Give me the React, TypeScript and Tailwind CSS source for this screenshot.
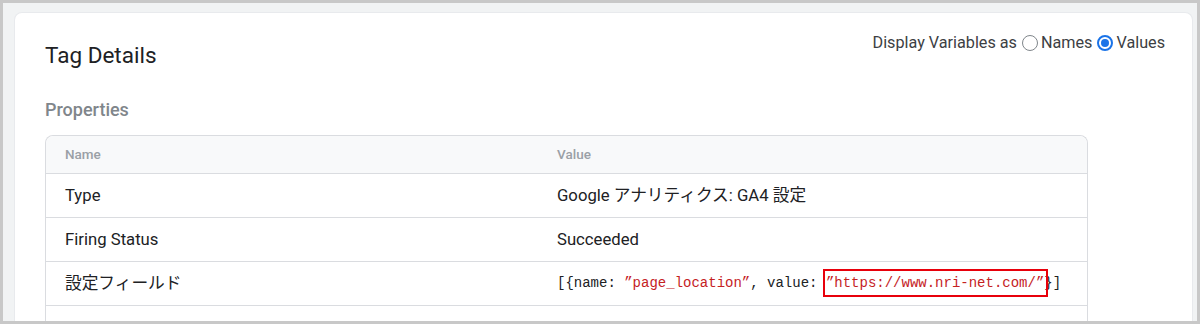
const rows = [
  { name: "Type", value: "Google アナリティクス: GA4 設定" },
  { name: "Firing Status", value: "Succeeded" },
];

function Radio({ checked, label }: { checked?: boolean; label: string }) {
  return (
    <label className="flex items-center gap-[3px]">
      <span
        className={
          checked
            ? "flex h-[16px] w-[16px] items-center justify-center rounded-full border-2 border-[#1a73e8]"
            : "h-[16px] w-[16px] rounded-full border border-[#80868b]"
        }
      >
        {checked ? <span className="h-[8px] w-[8px] rounded-full bg-[#1a73e8]" /> : null}
      </span>
      <span>{label}</span>
    </label>
  );
}

export default function App() {
  return (
    <div
      className="h-[324px] w-[1200px] overflow-hidden border-[3px] border-[#c8c8c8] bg-[#f1f3f4] pl-[11px] pr-[4px] pt-[9px]"
      style={{ fontFamily: 'Roboto, "Noto Sans CJK JP", sans-serif' }}
    >
      <div className="h-full rounded-t-lg border border-b-0 border-[#e8eaed] bg-white pl-[30px] pr-[27px] pt-[19px]">
        <div className="flex items-start justify-between">
          <h1 className="mt-[8px] text-[22.5px] leading-[30px] text-[#202124]">Tag Details</h1>
          <div className="flex items-center gap-[5px] text-[16.2px] leading-[22px] text-[#3c4043]">
            <span>Display Variables as</span>
            <Radio label="Names" />
            <Radio checked label="Values" />
          </div>
        </div>

        <h2 className="mt-[29px] text-[18px] font-medium leading-[22px] text-[#80868b]">Properties</h2>

        <div className="mt-[14px] w-[1043px] rounded-t-lg border border-b-0 border-[#dadce0] text-[16.7px] text-[#202124]">
          <div className="grid h-[37px] grid-cols-[511px_1fr] items-center rounded-t-lg bg-[#f8f9fa] text-[13.5px] font-medium text-[#9aa0a6]">
            <div className="pl-[19px]">Name</div>
            <div>Value</div>
          </div>
          {rows.map((r) => (
            <div key={r.name} className="grid h-[44px] grid-cols-[511px_1fr] items-center border-t border-[#dadce0]">
              <div className="pl-[19px]">{r.name}</div>
              <div>{r.value}</div>
            </div>
          ))}
          <div className="grid h-[44px] grid-cols-[511px_1fr] items-center border-t border-[#dadce0]">
            <div className="pl-[19px]">設定フィールド</div>
            <div
              className="whitespace-pre text-[14px] text-[#202124]"
              style={{ fontFamily: '"Liberation Mono", "Noto Sans CJK JP", monospace' }}
            >
              {"[{name: "}
              <span className="text-[#c5221f]">”page_location”</span>
              {", value: "}
              <span className="relative text-[#c5221f]">
                ”https://www.nri-net.com/”
                <span className="absolute -bottom-[6px] -left-[3px] -right-[4px] -top-[6px] border-2 border-[#e8000b]" />
              </span>
              {"}]"}
            </div>
          </div>
          <div className="h-[44px] border-t border-[#dadce0]" />
        </div>
      </div>
    </div>
  );
}
